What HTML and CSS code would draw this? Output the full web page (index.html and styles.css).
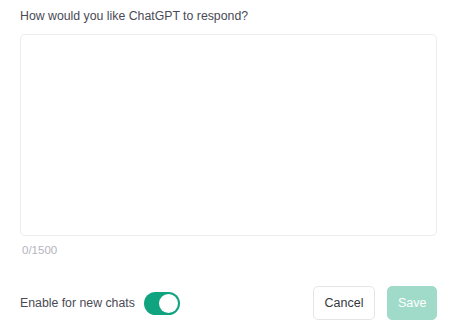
FILE: index.html
```html
<!DOCTYPE html>
<html>
<head>
<meta charset="utf-8">
<link rel="stylesheet" href="styles.css">
</head>
<body>
<div class="panel">
  <div class="label">How would you like ChatGPT to respond?</div>
  <textarea class="box"></textarea>
  <div class="count">0/1500</div>
  <div class="footer">
    <div class="enable">
      <span>Enable for new chats</span>
      <span class="toggle"><span class="knob"></span></span>
    </div>
    <div class="actions">
      <button class="btn cancel">Cancel</button>
      <button class="btn save">Save</button>
    </div>
  </div>
</div>
</body>
</html>
```
FILE: styles.css
```css
html, body { margin: 0; padding: 0; background: #fff; }
body { font-family: "Liberation Sans", Arial, sans-serif; color: #353740; }
.panel { padding: 6px 15px 0 20px; display: flex; flex-direction: column; }
.label { font-size: 12.3px; color: #4a4a55; line-height: 20px; height: 20px; }
.box {
  margin-top: 8px; height: 202px; box-sizing: border-box;
  border: 1px solid #ececf1; border-radius: 5px; resize: none; outline: none;
  width: 417px;
}
.count { font-size: 11.5px; color: #b4b4be; margin-top: 6px; line-height: 16px; padding-left: 2px; }
.footer { margin-top: 28px; display: flex; justify-content: space-between; align-items: center; width: 417px; }
.enable { display: flex; align-items: center; gap: 9px; font-size: 12.3px; color: #4a4a55; }
.toggle { width: 36px; height: 23px; border-radius: 12px; background: #10a37f; display: flex; align-items: center; justify-content: flex-end; padding: 0 2px; box-sizing: border-box; }
.knob { width: 19px; height: 19px; border-radius: 50%; background: #fff; }
.actions { display: flex; gap: 12px; }
.btn { font-family: inherit; font-size: 12.5px; height: 34px; border-radius: 5px; padding: 0 10px; }
.cancel { background: #fff; border: 1px solid #e5e5e5; color: #353740; width: 62px; }
.save { background: #a0dbc9; border: 1px solid #a0dbc9; color: #fff; width: 50px; }
```
